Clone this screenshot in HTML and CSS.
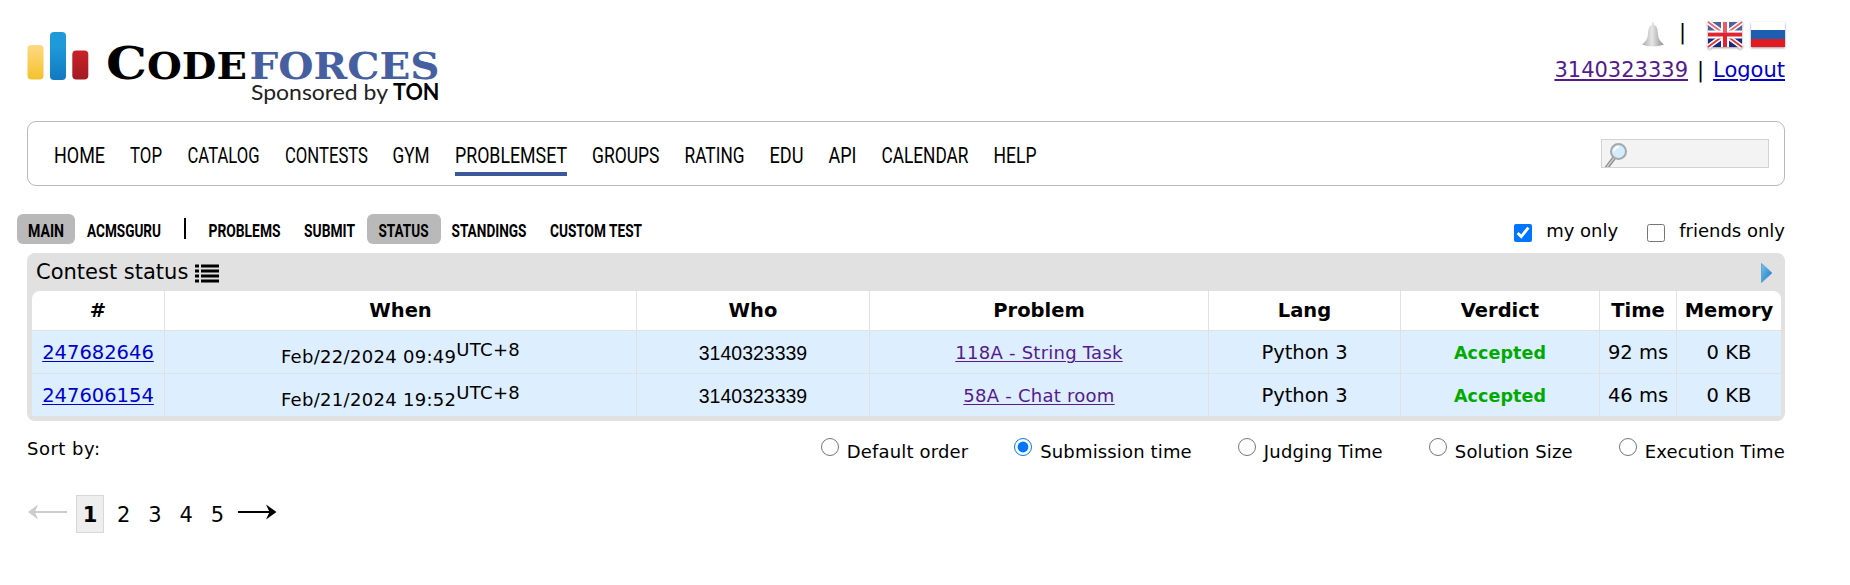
FILE: index.html
```html
<!DOCTYPE html>
<html lang="en">
<head>
<meta charset="utf-8">
<title>Status - Codeforces</title>
<link rel="stylesheet" href="styles.css">
</head>
<body>
<header class="header">
  <svg class="logo" width="415" height="80" viewBox="0 0 415 80" role="img" aria-label="Codeforces">
    <defs>
      <linearGradient id="gy" x2="0" y2="1"><stop offset="0" stop-color="#ffd983"/><stop offset="1" stop-color="#f3c22b"/></linearGradient>
      <linearGradient id="gb" x2="0" y2="1"><stop offset=".3" stop-color="#1e9ad8"/><stop offset="1" stop-color="#1179c0"/></linearGradient>
      <linearGradient id="gr" x2="0" y2="1"><stop offset="0" stop-color="#c92229"/><stop offset="1" stop-color="#a21b22"/></linearGradient>
    </defs>
    <rect x="0.500" y="15" width="16" height="34.500" rx="4" fill="url(#gy)"/>
    <rect x="23" y="2" width="16" height="48" rx="4" fill="url(#gb)"/>
    <rect x="45.300" y="20.500" width="16" height="29" rx="4" fill="url(#gr)"/>
    <g class="brand">
      <text x="79" y="48.500" font-size="44" textLength="41" lengthAdjust="spacingAndGlyphs">C</text>
      <text x="120" y="48.500" font-size="37" textLength="100" lengthAdjust="spacingAndGlyphs">ODE</text>
      <text class="brand-blue" x="222.500" y="48.500" font-size="37" textLength="190" lengthAdjust="spacingAndGlyphs">FORCES</text>
    </g>
    <text class="sponsor" x="224" y="69.500" textLength="137" lengthAdjust="spacingAndGlyphs">Sponsored by</text>
    <text class="sponsor sponsor-name" x="366" y="69.500" textLength="46.500" lengthAdjust="spacingAndGlyphs">TON</text>
  </svg>
  <div class="account">
    <div class="langs">
      <svg class="bell" width="24" height="26" viewBox="0 0 24 26">
        <defs><linearGradient id="gbell"><stop offset="0" stop-color="#a8a8a8"/><stop offset=".45" stop-color="#e6e6e6"/><stop offset="1" stop-color="#8f8f8f"/></linearGradient></defs>
        <path d="M12 1c-.8 0-1 1.500-1 3C7.500 5 7.300 9 7 13c-.3 4-1.500 7-6 10.500 6 2.500 16 2.500 22 0-4.500-3.500-5.700-6.500-6-10.500-.3-4-.5-8-4-9 0-1.500-.2-3-1-3z" fill="url(#gbell)"/>
      </svg>
      <span class="bar">|</span>
      <svg class="flag" width="34" height="25" viewBox="0 0 34 25">
        <rect width="34" height="25" fill="#1b2a7c"/>
        <path d="M0 0l34 25M34 0L0 25" stroke="#fff" stroke-width="5"/>
        <path d="M0 0l34 25M34 0L0 25" stroke="#e0343c" stroke-width="1.800"/>
        <path d="M17 0v25M0 12.500h34" stroke="#fff" stroke-width="8"/>
        <path d="M17 0v25M0 12.500h34" stroke="#e02330" stroke-width="4"/>
        <rect width="34" height="11" fill="#fff" opacity=".25"/>
      </svg>
      <svg class="flag" width="34" height="25" viewBox="0 0 34 25">
        <rect width="34" height="9" fill="#fff"/><rect y="8" width="34" height="9" fill="#1c5fb0"/><rect y="17" width="34" height="8" fill="#e01b22"/>
      </svg>
    </div>
    <div class="user"><a class="visited" href="#">3140323339</a><span class="divider">|</span><a href="#">Logout</a></div>
  </div>
</header>

<nav class="menu">
  <svg class="menu-items" width="1012" height="56" viewBox="0 0 1012 56">
    <text x="0" y="35" textLength="51" lengthAdjust="spacingAndGlyphs">HOME</text>
    <text x="76" y="35" textLength="32" lengthAdjust="spacingAndGlyphs">TOP</text>
    <text x="133.500" y="35" textLength="72" lengthAdjust="spacingAndGlyphs">CATALOG</text>
    <text x="231" y="35" textLength="83" lengthAdjust="spacingAndGlyphs">CONTESTS</text>
    <text x="338.500" y="35" textLength="37" lengthAdjust="spacingAndGlyphs">GYM</text>
    <text x="401" y="35" textLength="112" lengthAdjust="spacingAndGlyphs">PROBLEMSET</text>
    <text x="538" y="35" textLength="67.500" lengthAdjust="spacingAndGlyphs">GROUPS</text>
    <text x="630.500" y="35" textLength="60" lengthAdjust="spacingAndGlyphs">RATING</text>
    <text x="715.500" y="35" textLength="34" lengthAdjust="spacingAndGlyphs">EDU</text>
    <text x="774.500" y="35" textLength="28" lengthAdjust="spacingAndGlyphs">API</text>
    <text x="827.500" y="35" textLength="87" lengthAdjust="spacingAndGlyphs">CALENDAR</text>
    <text x="939.500" y="35" textLength="43" lengthAdjust="spacingAndGlyphs">HELP</text>
    <rect x="401" y="44" width="112" height="4" fill="#3b5998"/>
  </svg>
  <div class="search">
    <svg width="24" height="26" viewBox="0 0 24 26">
      <path d="M9 15L1.500 25" stroke="#8d8d8d" stroke-width="4"/><path d="M9 15L2 24" stroke="#ccc" stroke-width="1.500"/>
      <circle cx="13.500" cy="8.500" r="7.500" fill="#d3edfa" stroke="#a3a9ad" stroke-width="2"/>
      <path d="M9 8a5 5 0 0 1 5-4" stroke="#fff" stroke-width="2" fill="none"/>
    </svg>
  </div>
</nav>

<div class="subbar">
  <svg class="submenu" width="640" height="30" viewBox="17 0 640 30">
    <rect class="pill" x="17" width="58" height="30" rx="6"/>
    <rect class="pill" x="367" width="74" height="30" rx="6"/>
    <text x="28" y="22.500" textLength="36" lengthAdjust="spacingAndGlyphs">MAIN</text>
    <text x="87" y="22.500" textLength="74" lengthAdjust="spacingAndGlyphs">ACMSGURU</text>
    <rect x="184" y="4" width="2" height="21"/>
    <text x="208.500" y="22.500" textLength="72" lengthAdjust="spacingAndGlyphs">PROBLEMS</text>
    <text x="304" y="22.500" textLength="51" lengthAdjust="spacingAndGlyphs">SUBMIT</text>
    <text x="378.500" y="22.500" textLength="50" lengthAdjust="spacingAndGlyphs">STATUS</text>
    <text x="451.500" y="22.500" textLength="75" lengthAdjust="spacingAndGlyphs">STANDINGS</text>
    <text x="550" y="22.500" textLength="92" lengthAdjust="spacingAndGlyphs">CUSTOM TEST</text>
  </svg>
  <div class="filters">
    <label><input type="checkbox" checked>my only</label>
    <label><input type="checkbox">friends only</label>
  </div>
</div>

<section class="datatable">
  <div class="caption">
    <span>Contest status</span>
    <svg width="24" height="19" viewBox="0 0 24 19"><path d="M0 2h4M6 2h18M0 7h4M6 7h18M0 12h4M6 12h18M0 17h4M6 17h18" stroke="#000" stroke-width="3"/></svg>
    <svg class="next" width="12" height="20" viewBox="0 0 12 20"><defs><linearGradient id="ga" x2="1" y2="1"><stop offset="0" stop-color="#7cc4ee"/><stop offset="1" stop-color="#1673ba"/></linearGradient></defs><path d="M.5.500L11 10 .5 19.500z" fill="url(#ga)" stroke="#5aa7dc"/></svg>
  </div>
  <table>
    <colgroup><col class="c1"><col class="c2"><col class="c3"><col class="c4"><col class="c5"><col class="c6"><col class="c7"><col class="c8"></colgroup>
    <thead><tr><th>#</th><th>When</th><th>Who</th><th>Problem</th><th>Lang</th><th>Verdict</th><th>Time</th><th>Memory</th></tr></thead>
    <tbody>
      <tr><td><a href="#">247682646</a></td><td class="when">Feb/22/2024 09:49<sup>UTC+8</sup></td><td class="who">3140323339</td><td class="problem"><a class="visited" href="#">118A - String Task</a></td><td>Python 3</td><td class="ok">Accepted</td><td>92 ms</td><td>0 KB</td></tr>
      <tr><td><a href="#">247606154</a></td><td class="when">Feb/21/2024 19:52<sup>UTC+8</sup></td><td class="who">3140323339</td><td class="problem"><a class="visited" href="#">58A - Chat room</a></td><td>Python 3</td><td class="ok">Accepted</td><td>46 ms</td><td>0 KB</td></tr>
    </tbody>
  </table>
</section>

<div class="sort">
  <span>Sort by:</span>
  <div class="orders">
    <label><input type="radio" name="order"><span>Default order</span></label>
    <label><input type="radio" name="order" checked><span>Submission time</span></label>
    <label><input type="radio" name="order"><span>Judging Time</span></label>
    <label><input type="radio" name="order"><span>Solution Size</span></label>
    <label><input type="radio" name="order"><span>Execution Time</span></label>
  </div>
</div>

<div class="pages">
  <svg class="arrow off" width="40" height="18" viewBox="0 0 40 18"><path d="M40 9H5" stroke-width="2"/><path class="head" d="M1 9L11 1.500 8 9l3 7.500z"/></svg>
  <span class="page current">1</span><span class="page">2</span><span class="page">3</span><span class="page">4</span><span class="page">5</span>
  <svg class="arrow last" width="40" height="18" viewBox="0 0 40 18"><path d="M1 9H36" stroke-width="2"/><path class="head" d="M39.500 9L29 1.500 32.500 9 29 16.500z"/></svg>
</div>
</body>
</html>
```
FILE: styles.css
```css
* { box-sizing: border-box; }
body { margin: 0; padding: 0 65px 0 27px; width: 1850px; height: 585px; overflow: hidden; background: #fff; color: #000; font: 19.5px/1.2 "DejaVu Sans", sans-serif; }
a { color: #0000cc; text-decoration-thickness: 1px; text-underline-offset: 2px; }
a.visited { color: #551a8b; }
svg { overflow: visible; }

.header { display: flex; justify-content: space-between; height: 121px; }
.logo { margin-top: 30px; }
.brand { font-family: "DejaVu Serif", serif; font-weight: bold; }
.brand-blue { fill: #455fa0; }
.sponsor { font: 22px Lato, sans-serif; fill: #222; }
.sponsor-name { font-weight: bold; fill: #000; }
.account { display: flex; flex-direction: column; align-items: flex-end; font-size: 21px; }
.langs { display: flex; align-items: center; height: 26px; margin-top: 21px; }
.bar { margin: -3px 13px 0 14px; }
.flag { margin-left: 9px; filter: drop-shadow(0 1px 1px rgba(0,0,0,.4)); }
.user { margin-top: 9px; line-height: 28px; }
.user a { text-decoration-thickness: 2px; }
.divider { margin: 0 9px; }

.menu { display: flex; justify-content: space-between; height: 65px; border: 1px solid #b9b9b9; border-radius: 9px; padding: 6px 15px 0 26px; }
.menu-items { font: 22px Roboto, sans-serif; }
.search { width: 168px; height: 29px; margin-top: 11px; padding: 3px 0 0 3px; border: 1px solid #d3d3d3; background: #f3f3f3; overflow: hidden; }

.subbar { display: flex; justify-content: space-between; height: 39px; margin: 28px 0 0 -10px; }
.submenu { font: bold 17.5px Roboto, sans-serif; }
.pill { fill: #b9b9b9; }
.filters { display: flex; gap: 29px; font-size: 18px; padding-top: 6px; }
.filters label { display: flex; align-items: flex-start; }
.filters input { width: 18px; height: 18px; margin: 4px 14px 0 0; }

.datatable { height: 168px; padding: 0 4px 4px 5px; border-radius: 8px; background: #e1e1e1; }
.caption { display: flex; align-items: center; height: 38px; padding: 2px 8px 0 4px; font-size: 21px; }
.caption svg { margin-left: 7px; }
.caption .next { margin-left: auto; }
table { width: 1749px; table-layout: fixed; border-collapse: separate; border-spacing: 0; text-align: center; border-radius: 8px 8px 0 0; overflow: hidden; }
th, td { padding: 1px 0 0; border-right: 1px solid #e1e1e1; border-bottom: 1px solid #e1e1e1; white-space: nowrap; line-height: 24px; }
th { height: 40px; background: #fff; }
td { height: 43px; padding-top: 2px; background: #ddeeff; }
th:last-child, td:last-child { border-right: 0; }
.c1 { width: 133px; }
.c2 { width: 472px; }
.c3 { width: 233px; }
.c4 { width: 339px; }
.c5 { width: 192px; }
.c6 { width: 199px; }
.c7 { width: 77px; }
.c8 { width: 104px; }
.when { font-size: 18px; letter-spacing: .3px; padding-top: 9px; }
.when sup { font-size: 18px; line-height: 0; }
.who { font-family: "Liberation Sans", sans-serif; }
.problem { font-size: 18px; letter-spacing: .25px; }
.ok { font-size: 17.5px; letter-spacing: .1px; color: #00aa00; font-weight: bold; }

.sort { display: flex; justify-content: space-between; margin-top: 17px; height: 40px; font-size: 18px; line-height: 22px; }
.sort > span { letter-spacing: .5px; }
.orders { display: flex; gap: 46px; letter-spacing: .15px; }
.orders label { display: flex; }
.orders input { width: 18px; height: 18px; margin: 0 8px 0 0; }
.orders span { padding-top: 3px; }

.pages { display: flex; align-items: center; height: 38px; margin-top: 17px; font-size: 21px; }
.page { width: 31.300px; padding-top: 3px; text-align: center; }
.page.current { width: 28px; height: 38px; padding: 0; line-height: 38px; margin: 0 4px 0 9px; background: #eee; border: 1px solid #d8d8d8; font-weight: bold; }
.arrow { stroke: #000; fill: none; margin-bottom: 4px; }
.arrow.last { margin-left: 4px; }
.arrow .head { fill: #000; stroke: none; }
.arrow.off { stroke: #ccc; }
.arrow.off .head { fill: #ccc; }
```
